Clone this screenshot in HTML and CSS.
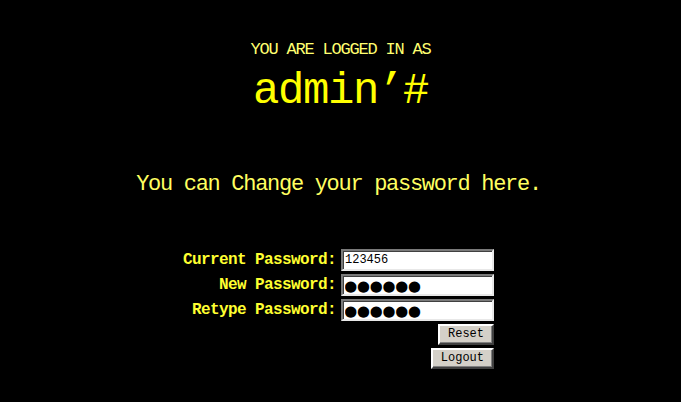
FILE: index.html
```html
<!DOCTYPE html>
<html lang="en">
<head>
<meta charset="utf-8">
<title>Change Password</title>
<link rel="stylesheet" href="styles.css">
</head>
<body>
<main class="page">
  <p class="logged">YOU ARE LOGGED IN AS</p>
  <h1 class="user">admin’#</h1>
  <p class="prompt">You can Change your password here.</p>
  <form class="form" onsubmit="return false">
    <label class="label" for="cur">Current Password:</label>
    <input class="field" id="cur" type="text" value="123456">
    <label class="label" for="new">New Password:</label>
    <input class="field dots" id="new" type="text" value="●●●●●●">
    <label class="label" for="re">Retype Password:</label>
    <input class="field dots" id="re" type="text" value="●●●●●●">
    <div class="actions">
      <button class="btn" type="reset">Reset</button>
      <button class="btn" type="button">Logout</button>
    </div>
  </form>
</main>
</body>
</html>
```
FILE: styles.css
```css
html, body {
  margin: 0;
  padding: 0;
  background: #000;
}
body {
  font-family: "Liberation Mono", "Courier New", monospace;
  color: #ffff40;
}
.page {
  display: flex;
  flex-direction: column;
  align-items: center;
}
.logged {
  margin: 40px 0 0;
  font-size: 17px;
  line-height: 20px;
  letter-spacing: -1.2px;
  color: #ffff70;
}
.user {
  margin: 9px 0 0;
  font-size: 44px;
  line-height: 44px;
  font-weight: normal;
  letter-spacing: -1.4px;
  color: #ffff00;
}
.prompt {
  margin: 60px 4px 0 0;
  font-size: 22px;
  line-height: 24px;
  letter-spacing: -1.3px;
  color: #ffff60;
}
.form {
  margin: 52px 4px 0 0;
  display: grid;
  grid-template-columns: auto 153px;
  column-gap: 5px;
  row-gap: 3px;
  align-items: center;
}
.label {
  justify-self: end;
  font-size: 16px;
  font-weight: bold;
  letter-spacing: -0.6px;
  color: #ffff30;
}
.field {
  box-sizing: border-box;
  width: 153px;
  height: 22px;
  margin: 0;
  padding: 0 2px;
  background: #fff;
  border: 2px solid;
  border-color: #7a7a7a #e8e8e8 #e8e8e8 #7a7a7a;
  box-shadow: inset 1px 1px 0 #404040;
  font-family: "Liberation Mono", monospace;
  font-size: 12px;
  color: #000;
  outline: none;
}
.field.dots {
  font-family: "DejaVu Sans Mono", monospace;
  font-size: 19px;
  letter-spacing: 1.3px;
  padding-left: 2px;
}
.actions {
  grid-column: 2;
  display: flex;
  flex-direction: column;
  align-items: flex-end;
  gap: 3px;
}
.btn {
  box-sizing: border-box;
  height: 21px;
  margin: 0;
  padding: 0 8px;
  background: #d4d0c8;
  border: 2px solid;
  border-color: #fff #404040 #404040 #fff;
  box-shadow: inset -1px -1px 0 #808080;
  font-family: "Liberation Mono", monospace;
  font-size: 12px;
  line-height: 15px;
  color: #000;
}
```
